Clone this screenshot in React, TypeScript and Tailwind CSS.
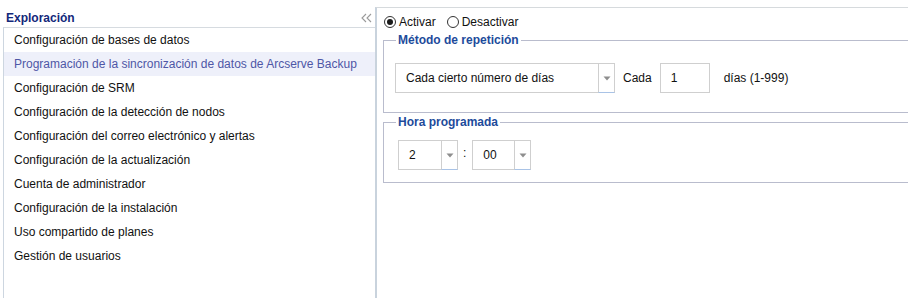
import React from "react";

const items = [
  "Configuración de bases de datos",
  "Programación de la sincronización de datos de Arcserve Backup",
  "Configuración de SRM",
  "Configuración de la detección de nodos",
  "Configuración del correo electrónico y alertas",
  "Configuración de la actualización",
  "Cuenta de administrador",
  "Configuración de la instalación",
  "Uso compartido de planes",
  "Gestión de usuarios",
];

function Arrow() {
  return (
    <svg width="8" height="5" viewBox="0 0 8 5">
      <polygon points="0.5,0.5 7.5,0.5 4,4.5" fill="#8e8e8e" />
    </svg>
  );
}

function Combo({ value, w }: { value: string; w: string }) {
  return (
    <div className={`flex h-[30px] ${w}`}>
      <div className="flex flex-1 items-center border-y border-l border-[#cfcfcf] bg-white pl-[10px] text-[12px] text-[#111]">
        {value}
      </div>
      <div className="flex w-[17px] items-center justify-center border border-[#cfcfcf] border-b-[#a9c3e6] bg-white">
        <Arrow />
      </div>
    </div>
  );
}

function Radio({ checked }: { checked: boolean }) {
  return (
    <span className="flex h-[12px] w-[12px] items-center justify-center rounded-full border border-[#333] bg-white">
      {checked && <span className="h-[6px] w-[6px] rounded-full bg-[#1a1a1a]" />}
    </span>
  );
}

export default function App() {
  return (
    <div className="flex h-[298px] w-[908px] overflow-hidden bg-white font-['Liberation_Sans',Arial,sans-serif] text-[12px]">
      {/* Left panel */}
      <div className="flex w-[375px] shrink-0 flex-col">
        <div className="flex h-[27px] items-end justify-between pb-[2px] pl-[6px] pr-[3px]">
          <span className="text-[12px] font-bold leading-[14px] text-[#13287a]">Exploración</span>
          <svg width="11" height="10" viewBox="0 0 11 10" className="mb-[2px]">
            <polyline points="5,1 1,5 5,9" fill="none" stroke="#9a9a9a" strokeWidth="1.1" />
            <polyline points="10,1 6,5 10,9" fill="none" stroke="#9a9a9a" strokeWidth="1.1" />
          </svg>
        </div>
        <div className="ml-[3px] flex-1 border-l border-t border-l-[#cdd6e0] border-t-[#d6dbe0] pl-0">
          {items.map((t, i) => (
            <div
              key={t}
              className={`flex h-[24px] items-center pl-[10px] text-[12px] ${
                i === 1 ? "bg-[#eef0fa] text-[#4e57a6]" : "text-[#111]"
              }`}
            >
              {t}
            </div>
          ))}
        </div>
      </div>

      {/* Right panel */}
      <div className="mt-[7px] flex flex-1 flex-col border-l-2 border-t border-l-[#c9d3dd] border-t-[#d6dadd] pl-[6px]">
        <div className="mt-[7px] flex h-[14px] items-center pl-[1px] text-[12px] text-[#111]">
          <Radio checked />
          <span className="ml-[3px]">Activar</span>
          <span className="ml-[11px]">
            <Radio checked={false} />
          </span>
          <span className="ml-[3px]">Desactivar</span>
        </div>

        <fieldset className="mt-[4px] border border-r-0 border-[#b9bccd]">
          <legend className="ml-[12px] px-[2px] text-[12px] font-bold leading-[14px] text-[#1d4b9b]">
            Método de repetición
          </legend>
          <div className="flex items-center pb-[19px] pl-[11px] pt-[16px] text-[12px] text-[#111]">
            <Combo value="Cada cierto número de días" w="w-[220px]" />
            <span className="ml-[8px]">Cada</span>
            <div className="ml-[8px] flex h-[30px] w-[50px] items-center border border-[#cfcfcf] pl-[10px]">1</div>
            <span className="ml-[14px]">días (1-999)</span>
          </div>
        </fieldset>

        <fieldset className="mt-[2px] border border-r-0 border-[#b9bccd]">
          <legend className="ml-[12px] px-[2px] text-[12px] font-bold leading-[14px] text-[#1d4b9b]">
            Hora programada
          </legend>
          <div className="flex items-center pb-[12px] pl-[14px] pt-[11px] text-[12px] text-[#111]">
            <Combo value="2" w="w-[60px]" />
            <span className="ml-[5px] mr-[6px] -mt-[4px]">:</span>
            <Combo value="00" w="w-[59px]" />
          </div>
        </fieldset>
      </div>
    </div>
  );
}
